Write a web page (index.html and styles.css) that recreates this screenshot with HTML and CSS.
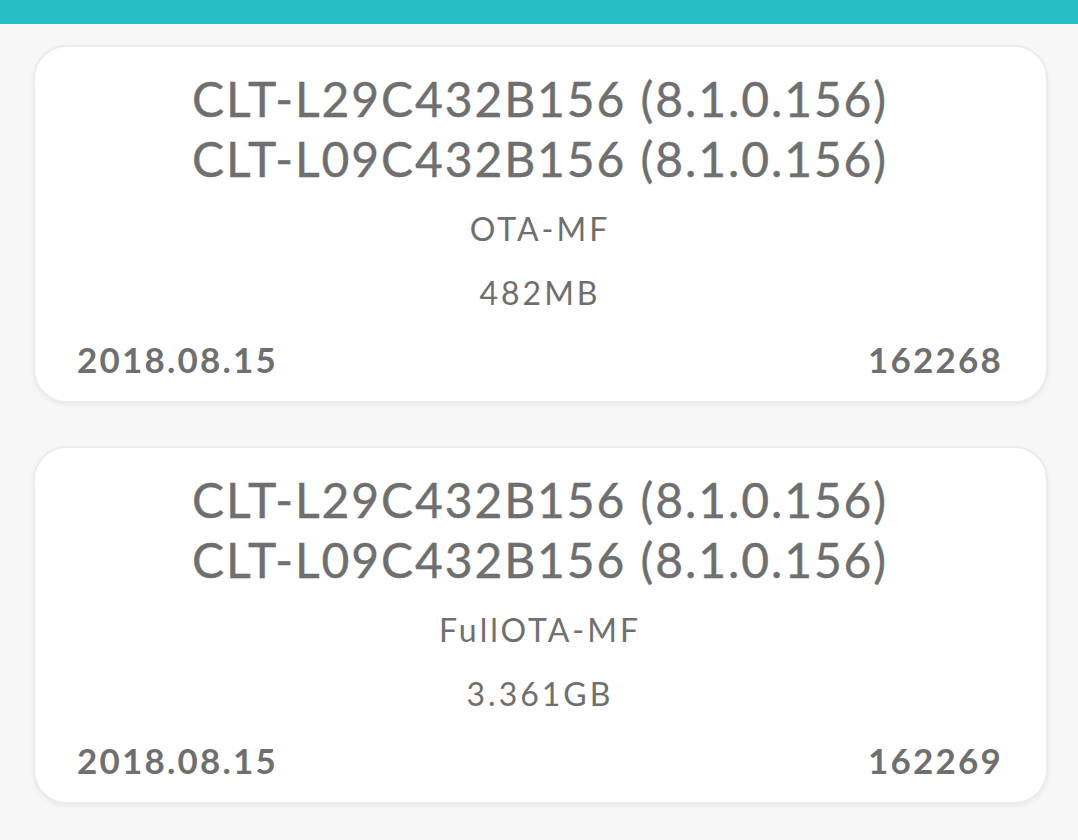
FILE: index.html
```html
<!DOCTYPE html>
<html lang="en">
<head>
  <meta charset="UTF-8" />
  <meta name="viewport" content="width=device-width, initial-scale=1.0" />
  <title>Firmware list</title>
  <link rel="stylesheet" href="styles.css">
</head>
<body>
  <header class="top-bar"></header>

  <main class="fw-list">
    <div class="fw-card">
      <div class="fw-title">
        <div>CLT-L29C432B156 (8.1.0.156)</div>
        <div>CLT-L09C432B156 (8.1.0.156)</div>
      </div>
      <div class="fw-type">OTA-MF</div>
      <div class="fw-size">482MB</div>
      <div class="fw-footer">
        <span class="fw-date">2018.08.15</span>
        <span class="fw-id">162268</span>
      </div>
    </div>

    <div class="fw-card">
      <div class="fw-title">
        <div>CLT-L29C432B156 (8.1.0.156)</div>
        <div>CLT-L09C432B156 (8.1.0.156)</div>
      </div>
      <div class="fw-type">FullOTA-MF</div>
      <div class="fw-size">3.361GB</div>
      <div class="fw-footer">
        <span class="fw-date">2018.08.15</span>
        <span class="fw-id">162269</span>
      </div>
    </div>
  </main>
</body>
</html>
```

FILE: styles.css
```css
:root {
  --bg: #f7f7f7;
  --accent: #26bec4;
  --text: #6f6f6f;
  --card: #ffffff;
}
* { margin: 0; padding: 0; box-sizing: border-box; }
body {
  background: var(--bg);
  color: var(--text);
  font-family: Lato, 'Noto Sans', sans-serif;
  min-height: 100vh;
}
.top-bar {
  height: 24px;
  background: var(--accent);
}
.fw-list {
  display: flex;
  flex-direction: column;
  gap: 43px;
  padding: 21px 30px 0 33px;
}
.fw-card {
  background: var(--card);
  border: 2px solid #ececec;
  border-radius: 34px;
  box-shadow: 0 2px 4px rgba(0, 0, 0, 0.06);
  height: 358px;
  padding: 22px 43px 0 42px;
  display: flex;
  flex-direction: column;
  align-items: center;
  text-align: center;
}
.fw-title {
  font-size: 48px;
  line-height: 60px;
  letter-spacing: 1.9px;
  -webkit-text-stroke: 0.4px var(--text);
}
.fw-type, .fw-size {
  font-size: 32px;
  line-height: 40px;
  letter-spacing: 3px;
}
.fw-type { margin-top: 20px; }
.fw-size { margin-top: 24px; }
.fw-footer {
  align-self: stretch;
  display: flex;
  justify-content: space-between;
  margin-top: 24px;
  font-size: 35px;
  line-height: 44px;
  font-weight: 700;
  letter-spacing: 2.2px;
}
```
